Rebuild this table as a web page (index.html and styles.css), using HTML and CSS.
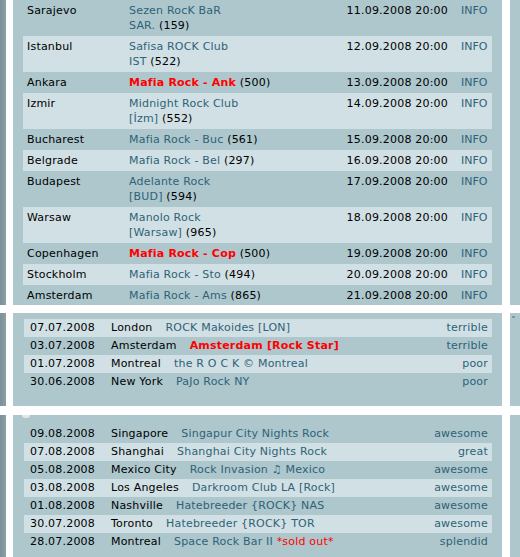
FILE: index.html
```html
<!DOCTYPE html>
<html>
<head>
<meta charset="utf-8">
<link rel="stylesheet" href="styles.css">
</head>
<body>
<div class="page">
  <div class="band band1">
    <div class="side left"></div>
    <section class="panel p1">
      <div class="gig two"><span class="city">Sarajevo</span><span class="venue"><a>Sezen RocK BaR<br>SAR.</a> (159)</span><span class="when">11.09.2008 20:00</span><a class="info">INFO</a></div>
      <div class="gig two alt"><span class="city">Istanbul</span><span class="venue"><a>Safisa ROCK Club<br>IST</a> (522)</span><span class="when">12.09.2008 20:00</span><a class="info">INFO</a></div>
      <div class="gig"><span class="city">Ankara</span><span class="venue"><a class="hot">Mafia Rock - Ank</a> (500)</span><span class="when">13.09.2008 20:00</span><a class="info">INFO</a></div>
      <div class="gig two alt"><span class="city">Izmir</span><span class="venue"><a>Midnight Rock Club<br>[İzm]</a> (552)</span><span class="when">14.09.2008 20:00</span><a class="info">INFO</a></div>
      <div class="gig"><span class="city">Bucharest</span><span class="venue"><a>Mafia Rock - Buc</a> (561)</span><span class="when">15.09.2008 20:00</span><a class="info">INFO</a></div>
      <div class="gig alt"><span class="city">Belgrade</span><span class="venue"><a>Mafia Rock - Bel</a> (297)</span><span class="when">16.09.2008 20:00</span><a class="info">INFO</a></div>
      <div class="gig two"><span class="city">Budapest</span><span class="venue"><a>Adelante Rock<br>[BUD]</a> (594)</span><span class="when">17.09.2008 20:00</span><a class="info">INFO</a></div>
      <div class="gig two alt"><span class="city">Warsaw</span><span class="venue"><a>Manolo Rock<br>[Warsaw]</a> (965)</span><span class="when">18.09.2008 20:00</span><a class="info">INFO</a></div>
      <div class="gig"><span class="city">Copenhagen</span><span class="venue"><a class="hot">Mafia Rock - Cop</a> (500)</span><span class="when">19.09.2008 20:00</span><a class="info">INFO</a></div>
      <div class="gig alt"><span class="city">Stockholm</span><span class="venue"><a>Mafia Rock - Sto</a> (494)</span><span class="when">20.09.2008 20:00</span><a class="info">INFO</a></div>
      <div class="gig"><span class="city">Amsterdam</span><span class="venue"><a>Mafia Rock - Ams</a> (865)</span><span class="when">21.09.2008 20:00</span><a class="info">INFO</a></div>
    </section>
    <div class="side right"></div>
  </div>

  <div class="band band2">
    <div class="side left"></div>
    <section class="panel p2">
      <div class="past alt"><span class="date">07.07.2008</span><span class="town">London</span><a class="club">ROCK Makoides [LON]</a><a class="rate">terrible</a></div>
      <div class="past"><span class="date">03.07.2008</span><span class="town">Amsterdam</span><a class="club hot">Amsterdam [Rock Star]</a><a class="rate">terrible</a></div>
      <div class="past alt"><span class="date">01.07.2008</span><span class="town">Montreal</span><a class="club">the R O C K © Montreal</a><a class="rate">poor</a></div>
      <div class="past"><span class="date">30.06.2008</span><span class="town">New York</span><a class="club">PaJo Rock NY</a><a class="rate">poor</a></div>
    </section>
    <div class="side right"><span class="mark"></span></div>
  </div>

  <div class="band band3">
    <div class="side left"></div>
    <section class="panel p3">
      <span class="glint"></span>
      <div class="past"><span class="date">09.08.2008</span><span class="town">Singapore</span><a class="club">Singapur City Nights Rock</a><a class="rate">awesome</a></div>
      <div class="past alt"><span class="date">07.08.2008</span><span class="town">Shanghai</span><a class="club">Shanghai City Nights Rock</a><a class="rate">great</a></div>
      <div class="past"><span class="date">05.08.2008</span><span class="town">Mexico City</span><a class="club">Rock Invasion ♫ Mexico</a><a class="rate">awesome</a></div>
      <div class="past alt"><span class="date">03.08.2008</span><span class="town">Los Angeles</span><a class="club">Darkroom Club LA [Rock]</a><a class="rate">awesome</a></div>
      <div class="past"><span class="date">01.08.2008</span><span class="town">Nashville</span><a class="club">Hatebreeder {ROCK} NAS</a><a class="rate">awesome</a></div>
      <div class="past alt"><span class="date">30.07.2008</span><span class="town">Toronto</span><a class="club">Hatebreeder {ROCK} TOR</a><a class="rate">awesome</a></div>
      <div class="past"><span class="date">28.07.2008</span><span class="town">Montreal</span><span class="club"><a>Space Rock Bar II</a> <span class="sold">*sold out*</span></span><a class="rate">splendid</a></div>
    </section>
    <div class="side right"></div>
  </div>
</div>
</body>
</html>
```

FILE: styles.css
```css
html, body {
  margin: 0;
  padding: 0;
  background: #ffffff;
}
body {
  width: 520px;
  height: 557px;
  overflow: hidden;
  font-family: "DejaVu Sans", Verdana, sans-serif;
  font-size: 11px;
  letter-spacing: 0.2px;
  color: #000;
}
a {
  color: #2f6278;
  text-decoration: none;
}
.page {
  display: flex;
  flex-direction: column;
}
.band {
  display: flex;
  flex: none;
}
.band1 { height: 305px; }
.band2 { height: 93px; margin-top: 8px; }
.band3 { height: 142px; margin-top: 9px; }

.side.left {
  width: 6px;
  margin-right: 7px;
  background: linear-gradient(to right, #7b9097, #8aa0a6);
}
.side.right {
  width: 10px;
  margin-left: 8px;
  background: #adc7cd;
  position: relative;
}
.mark {
  position: absolute;
  left: 2px;
  top: 3px;
  width: 3px;
  height: 2px;
  background: #7f98a0;
}
.panel {
  width: 489px;
  box-sizing: border-box;
  background: #adc7cd;
  overflow: hidden;
  position: relative;
}
.p1 { padding: 0 10px 0 10px; }
.p2 { padding: 6px 10px 0 11px; }
.p3 { padding: 10px 10px 0 11px; }

.glint {
  position: absolute;
  left: 9px;
  top: 0;
  width: 8px;
  height: 3px;
  border-radius: 0 0 4px 4px;
  background: rgba(255, 255, 255, 0.6);
}

.gig {
  display: grid;
  grid-template-columns: 106px 1fr auto 31px;
  padding: 3px 0;
  line-height: 15px;
  height: 15px;
}
.gig.two { height: 30px; }
.alt { background: #d1e0e4; }
.city { padding-left: 4px; }
.when { padding-right: 13px; text-align: right; }
.info { text-align: left; letter-spacing: 0; }

.past {
  display: flex;
  align-items: center;
  height: 18px;
  line-height: 18px;
  padding: 0 4px 0 6px;
}
.date { width: 81px; flex: none; }
.town { flex: none; }
.club { margin-left: 13px; white-space: nowrap; color: #2f6278; }
.rate { margin-left: auto; }
.sold { color: #ff0000; }

a.hot, .club.hot {
  color: #ff0000;
  font-weight: bold;
}
```
